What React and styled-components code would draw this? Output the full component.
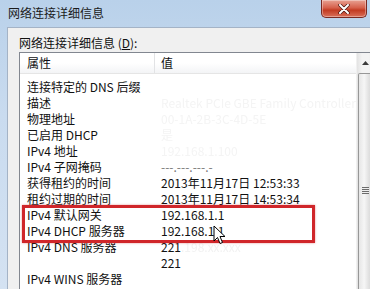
import React from 'react';
import styled, { createGlobalStyle } from 'styled-components';

const Global = createGlobalStyle`
  html, body { margin: 0; padding: 0; background: #f0f0f0; }
  body { font-family: "Noto Sans CJK SC", "Noto Sans", sans-serif; }
`;

const Window = styled.div`
  position: relative;
  width: 370px;
  height: 289px;
  overflow: hidden;
  display: flex;
  flex-direction: column;
  background: linear-gradient(180deg, #b9d1ea 0%, #c9dbef 40%, #d4e2f2 100%);
`;

const TitleBar = styled.div`
  height: 27px;
  flex: none;
  display: flex;
  align-items: flex-start;
  justify-content: space-between;
`;

const Title = styled.div`
  padding: 5px 0 0 8px;
  font-size: 12px;
  line-height: 16px;
  color: #1b1b1b;
`;

const CloseBtn = styled.div`
  width: 44px;
  height: 17px;
  margin-right: 3px;
  border: 1px solid #7a2a22;
  border-top: none;
  border-radius: 0 0 5px 5px;
  background: linear-gradient(180deg, #e8a293 0%, #d6614c 45%, #c23b22 60%, #d9705a 100%);
  display: flex;
  align-items: center;
  justify-content: center;
  box-shadow: inset 0 0 0 1px rgba(255,255,255,0.35);
`;

const Frame = styled.div`
  flex: 1;
  display: flex;
  padding: 0 3px 0 7px;
`;

const Client = styled.div`
  flex: 1;
  background: #f0f0f0;
  border-top: 1px solid #a4b3c6;
  border-left: 1px solid #a4b3c6;
  border-right: 1px solid #a4b3c6;
  padding: 7px 8px 0 11px;
  display: flex;
  flex-direction: column;
`;

const Label = styled.div`
  font-size: 12px;
  line-height: 16px;
  color: #111;
  margin-bottom: 1px;
  u { text-decoration: underline; }
`;

const ListBox = styled.div`
  flex: 1;
  border: 1px solid #828790;
  border-bottom: none;
  background: #fff;
  display: flex;
`;

const ListMain = styled.div`
  flex: 1;
  display: flex;
  flex-direction: column;
`;

const Header = styled.div`
  height: 20px;
  display: grid;
  grid-template-columns: 135px 1fr;
  background: linear-gradient(180deg, #ffffff 0%, #ffffff 50%, #f3f4f6 100%);
  border-bottom: 1px solid #e5e5e5;
`;

const HeadCell = styled.div`
  font-size: 12px;
  line-height: 20px;
  color: #111;
  padding-left: ${p => p.$pad}px;
  border-right: ${p => (p.$divider ? '1px solid #e2e3e5' : 'none')};
`;

const Rows = styled.div`
  padding-top: 5px;
  display: flex;
  flex-direction: column;
`;

const Row = styled.div`
  height: 16px;
  display: grid;
  grid-template-columns: 134px 1fr;
  font-size: 12px;
  line-height: 16px;
  color: #111;
  white-space: nowrap;
`;

const Prop = styled.div`
  padding-left: 7px;
`;

const Val = styled.div`
  padding-left: 7px;
  color: ${p => (p.$faint ? '#f4f4f4' : p.$dash ? '#777' : '#111')};
  filter: ${p => (p.$faint ? 'blur(0.6px)' : 'none')};
`;

const Faint = styled.span`
  color: #f2f2f2;
  filter: blur(0.6px);
`;

const Scrollbar = styled.div`
  width: 17px;
  flex: none;
  display: flex;
  flex-direction: column;
  background: linear-gradient(90deg, #e3e3e3 0%, #f3f3f3 30%, #f3f3f3 70%, #e6e6e6 100%);
  border-left: 1px solid #f0f0f0;
`;

const ArrowBtn = styled.div`
  height: 20px;
  display: flex;
  align-items: center;
  justify-content: center;
`;

const Thumb = styled.div`
  flex: 1;
  margin: 0 1px 0 1px;
  border: 1px solid #979797;
  border-bottom: none;
  border-radius: 2px 2px 0 0;
  background: linear-gradient(90deg, #e6e6e6 0%, #f6f6f6 40%, #e4e4e4 70%, #d4d4d4 100%);
  display: flex;
  justify-content: center;
  padding-top: 113px;
`;

const Grip = styled.div`
  width: 7px;
  height: 7px;
  background: repeating-linear-gradient(180deg, #6c6c6c 0 1px, #eeeeee 1px 2px);
`;

const RightEdge = styled.div`
  width: 1px;
`;

const Highlight = styled.div`
  position: absolute;
  left: 22px;
  top: 205px;
  width: 287px;
  height: 32px;
  border: 3px solid #d0262a;
  box-shadow: 0 0 2px rgba(208, 38, 42, 0.5);
  pointer-events: none;
`;

const Cursor = styled.svg`
  position: absolute;
  left: 213px;
  top: 225px;
`;

const rows = [
  { p: '连接特定的 DNS 后缀', v: '' },
  { p: '描述', v: 'Realtek PCIe GBE Family Controller', faint: true },
  { p: '物理地址', v: '00-1A-2B-3C-4D-5E', faint: true },
  { p: '已启用 DHCP', v: '是', faint: true },
  { p: 'IPv4 地址', v: '192.168.1.100', faint: true },
  { p: 'IPv4 子网掩码', v: '---.---.---.-', dash: true },
  { p: '获得租约的时间', v: '2013年11月17日 12:53:33' },
  { p: '租约过期的时间', v: '2013年11月17日 14:53:34' },
  { p: 'IPv4 默认网关', v: '192.168.1.1' },
  { p: 'IPv4 DHCP 服务器', v: '192.168.1.1' },
  { p: 'IPv4 DNS 服务器', v: '221', rest: '.198.xx.xxx' },
  { p: '', v: '221' },
  { p: 'IPv4 WINS 服务器', v: '' },
];

export default function App() {
  return (
    <>
      <Global />
      <Window>
        <TitleBar>
          <Title>网络连接详细信息</Title>
          <CloseBtn>
            <svg width="12" height="10" viewBox="0 0 12 10">
              <path d="M2 1 L10 9 M10 1 L2 9" stroke="#4a1510" strokeWidth="3.4" strokeLinecap="round" />
              <path d="M2 1 L10 9 M10 1 L2 9" stroke="#ffffff" strokeWidth="2" strokeLinecap="round" />
            </svg>
          </CloseBtn>
        </TitleBar>
        <Frame>
          <Client>
            <Label>网络连接详细信息 (<u>D</u>):</Label>
            <ListBox>
              <ListMain>
                <Header>
                  <HeadCell $pad={7} $divider>属性</HeadCell>
                  <HeadCell $pad={6}>值</HeadCell>
                </Header>
                <Rows>
                  {rows.map((r, i) => (
                    <Row key={i}>
                      <Prop>{r.p}</Prop>
                      <Val $faint={r.faint} $dash={r.dash}>
                        {r.v}
                        {r.rest && <Faint>{r.rest}</Faint>}
                      </Val>
                    </Row>
                  ))}
                </Rows>
              </ListMain>
              <Scrollbar>
                <ArrowBtn>
                  <svg width="7" height="4" viewBox="0 0 7 4">
                    <path d="M0 4 L3.5 0 L7 4 Z" fill="#3b3b3b" />
                  </svg>
                </ArrowBtn>
                <Thumb>
                  <Grip />
                </Thumb>
              </Scrollbar>
            </ListBox>
          </Client>
          <RightEdge />
        </Frame>
        <Highlight />
        <Cursor width="13" height="20" viewBox="0 0 13 20">
          <path d="M1 1 L1 16 L4.5 12.5 L7 18.5 L9.5 17.5 L7 11.5 L12 11.5 Z" fill="#fff" stroke="#000" strokeWidth="1" strokeLinejoin="round" />
        </Cursor>
      </Window>
    </>
  );
}
